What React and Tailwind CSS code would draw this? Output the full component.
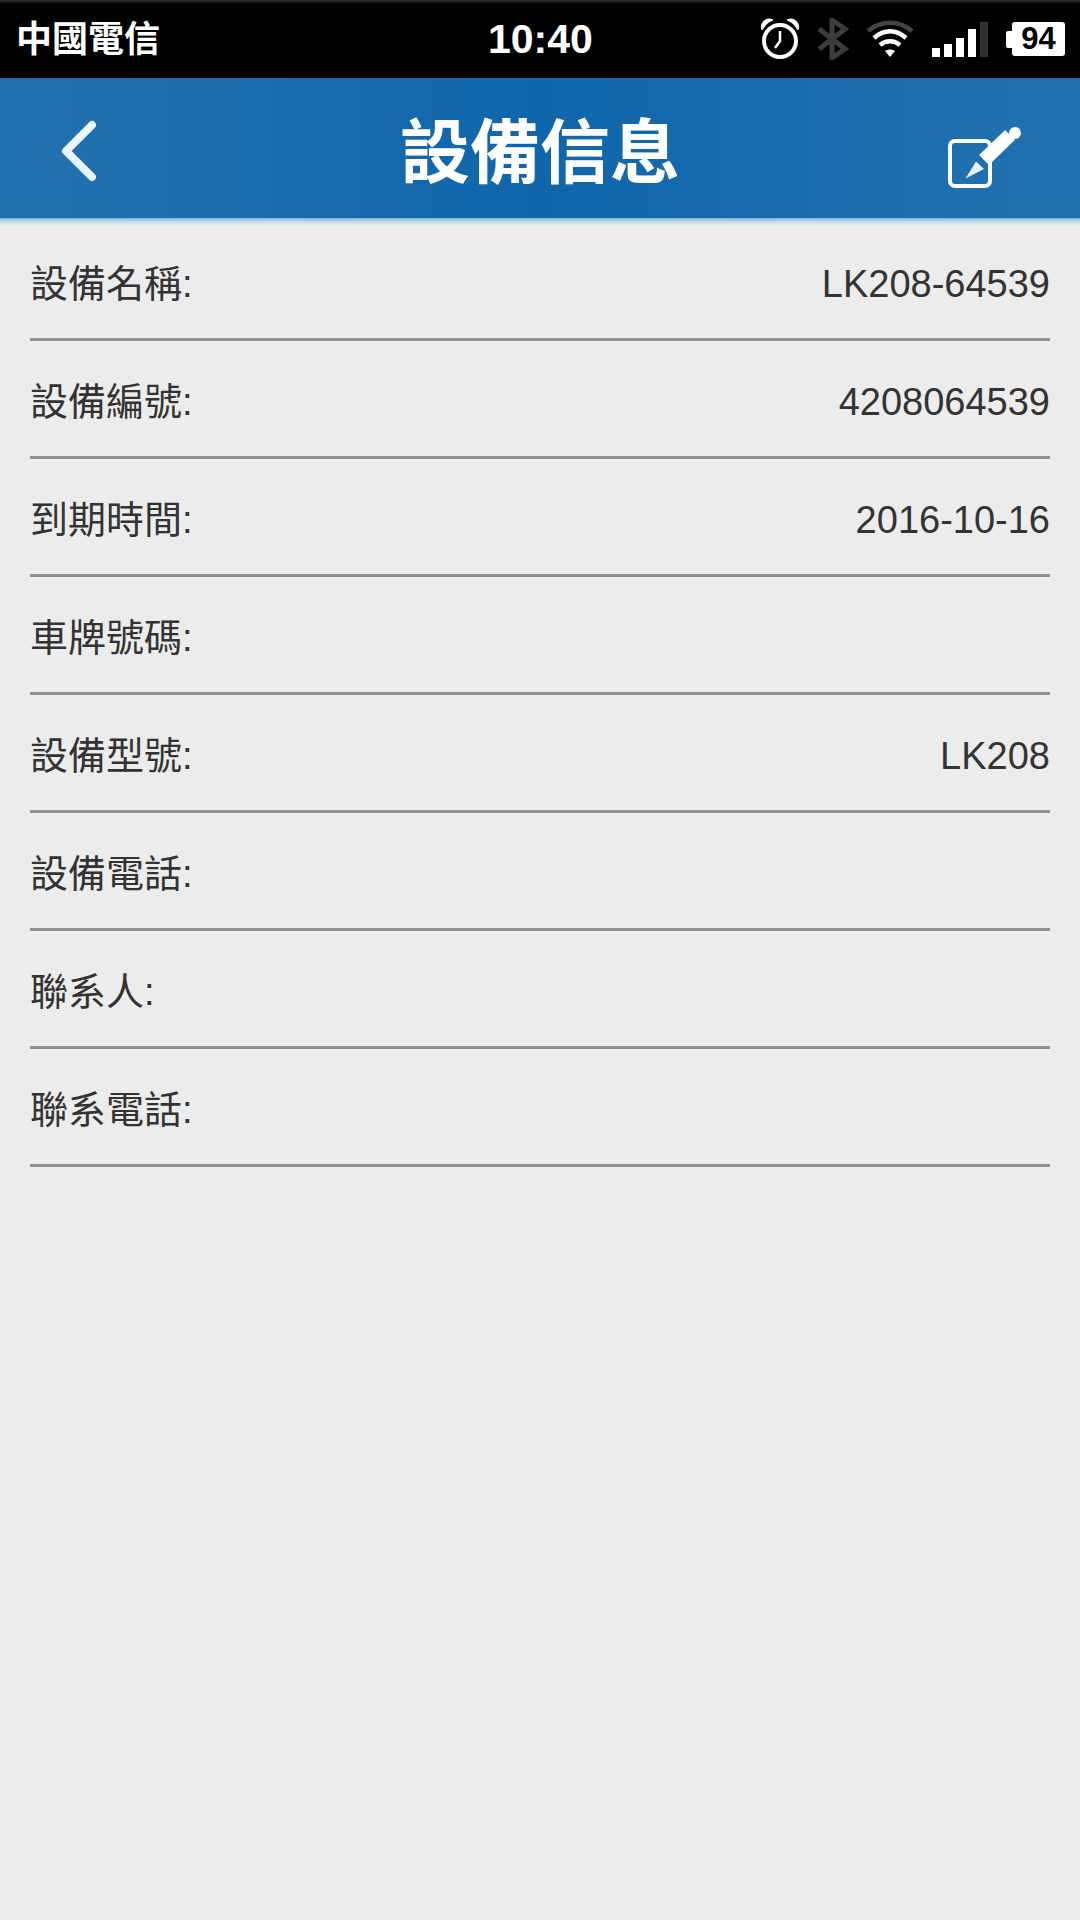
import React from 'react';

const rows = [
  { label: '設備名稱:', value: 'LK208-64539' },
  { label: '設備編號:', value: '4208064539' },
  { label: '到期時間:', value: '2016-10-16' },
  { label: '車牌號碼:', value: '' },
  { label: '設備型號:', value: 'LK208' },
  { label: '設備電話:', value: '' },
  { label: '聯系人:', value: '' },
  { label: '聯系電話:', value: '' },
];

const cjk = "font-['Liberation_Sans','Noto_Sans_CJK_TC',sans-serif]";

const AlarmIcon = () => (
  <svg width="40" height="42" viewBox="0 0 40 42" fill="none" stroke="white">
    <circle cx="20" cy="23" r="16" strokeWidth="4" />
    <path d="M20 13v10l-5 7" strokeWidth="2.500" />
    <path d="M2 11C1 5 6 0 12 2 8 3 5 6 2 11Z" fill="white" strokeWidth="2" strokeLinejoin="round" />
    <path d="M38 11C39 5 34 0 28 2 32 3 35 6 38 11Z" fill="white" strokeWidth="2" strokeLinejoin="round" />
  </svg>
);

const BluetoothIcon = () => (
  <svg width="34" height="42" viewBox="0 0 34 42" fill="none" stroke="#3c3c3c" strokeWidth="5">
    <path d="M3 11l26 20-13 9V2l13 9L3 31" />
  </svg>
);

const WifiIcon = () => (
  <svg width="48" height="38" viewBox="0 0 48 38" fill="none" stroke="white" strokeWidth="4.500">
    <path d="M2 11C15 0 33 0 46 11" stroke="#444" />
    <path d="M8 18C18 9 30 9 40 18" />
    <path d="M14 25C20 20 28 20 34 25" />
    <path d="M19 31C22 29 26 29 29 31L24 37Z" fill="white" stroke="none" />
  </svg>
);

const SignalIcon = () => (
  <div className="flex items-end gap-[4px]">
    <div className="w-[8px] h-[9px] bg-white" />
    <div className="w-[8px] h-[13px] bg-white" />
    <div className="w-[8px] h-[19px] bg-white" />
    <div className="w-[8px] h-[28px] bg-white" />
    <div className="w-[8px] h-[35px] bg-[#333]" />
  </div>
);

const BackIcon = () => (
  <svg width="36" height="62" viewBox="0 0 36 62" fill="none" stroke="#eaf6fc" strokeWidth="8" strokeLinecap="round" strokeLinejoin="round">
    <path d="M31 5L5 31l26 26" />
  </svg>
);

const EditIcon = () => (
  <svg width="78" height="66" viewBox="0 0 78 66" fill="none">
    <rect x="5" y="16" width="40" height="45" rx="5" stroke="white" strokeWidth="4" />
    <path d="M31 36.500L39 44L20.500 53.500Z" fill="white" opacity="0.9" />
    <path d="M39 35L65 10" stroke="white" strokeWidth="14" />
    <circle cx="70" cy="8" r="6" fill="white" />
  </svg>
);

export default function App() {
  return (
    <div className={`w-[1080px] h-[1920px] bg-[#ececec] flex flex-col ${cjk}`}>
      <div className="h-[78px] bg-black bg-[linear-gradient(to_bottom,#333333,#000000_4px)] flex items-center justify-between pl-[16px] pr-[15px] text-white relative">
        <span className="text-[36px] font-bold pt-[2px]">中國電信</span>
        <span className="absolute left-[488px] text-[41px] font-bold pt-[2px]">10:40</span>
        <div className="flex items-center">
          <AlarmIcon />
          <div className="ml-[16px]"><BluetoothIcon /></div>
          <div className="ml-[16px]"><WifiIcon /></div>
          <div className="ml-[18px]"><SignalIcon /></div>
          <div className="ml-[18px] flex items-center">
            <div className="w-[6px] h-[17px] bg-white rounded-l-[2px]" />
            <div className="w-[53px] h-[34px] bg-white rounded-[3px] flex items-center justify-center text-black text-[31px] font-bold">94</div>
          </div>
        </div>
      </div>

      <div className="h-[140px] bg-gradient-to-r from-[#2272b0] via-[#0f66ab] to-[#2272b0] border-y border-[#1a6aa8] flex items-center justify-between pl-[61px] pr-[57px] relative">
        <div className="mt-[6px]"><BackIcon /></div>
        <span className="absolute left-0 right-0 pt-[12px] text-center text-white text-[70px] font-bold">設備信息</span>
        <div className="mt-[20px]"><EditIcon /></div>
      </div>
      <div className="h-[8px] bg-gradient-to-b from-[#7db4d6] via-[#c5e0ee] to-[#e4eef3]" />

      <div className="px-[30px] -mt-[3px]">
        {rows.map((row) => (
          <div key={row.label} className="h-[118px] border-b-[3px] border-[#8f8f8f] flex items-center justify-between text-[38px] text-[#333] pt-[7px]">
            <span>{row.label}</span>
            <span>{row.value}</span>
          </div>
        ))}
      </div>
    </div>
  );
}
